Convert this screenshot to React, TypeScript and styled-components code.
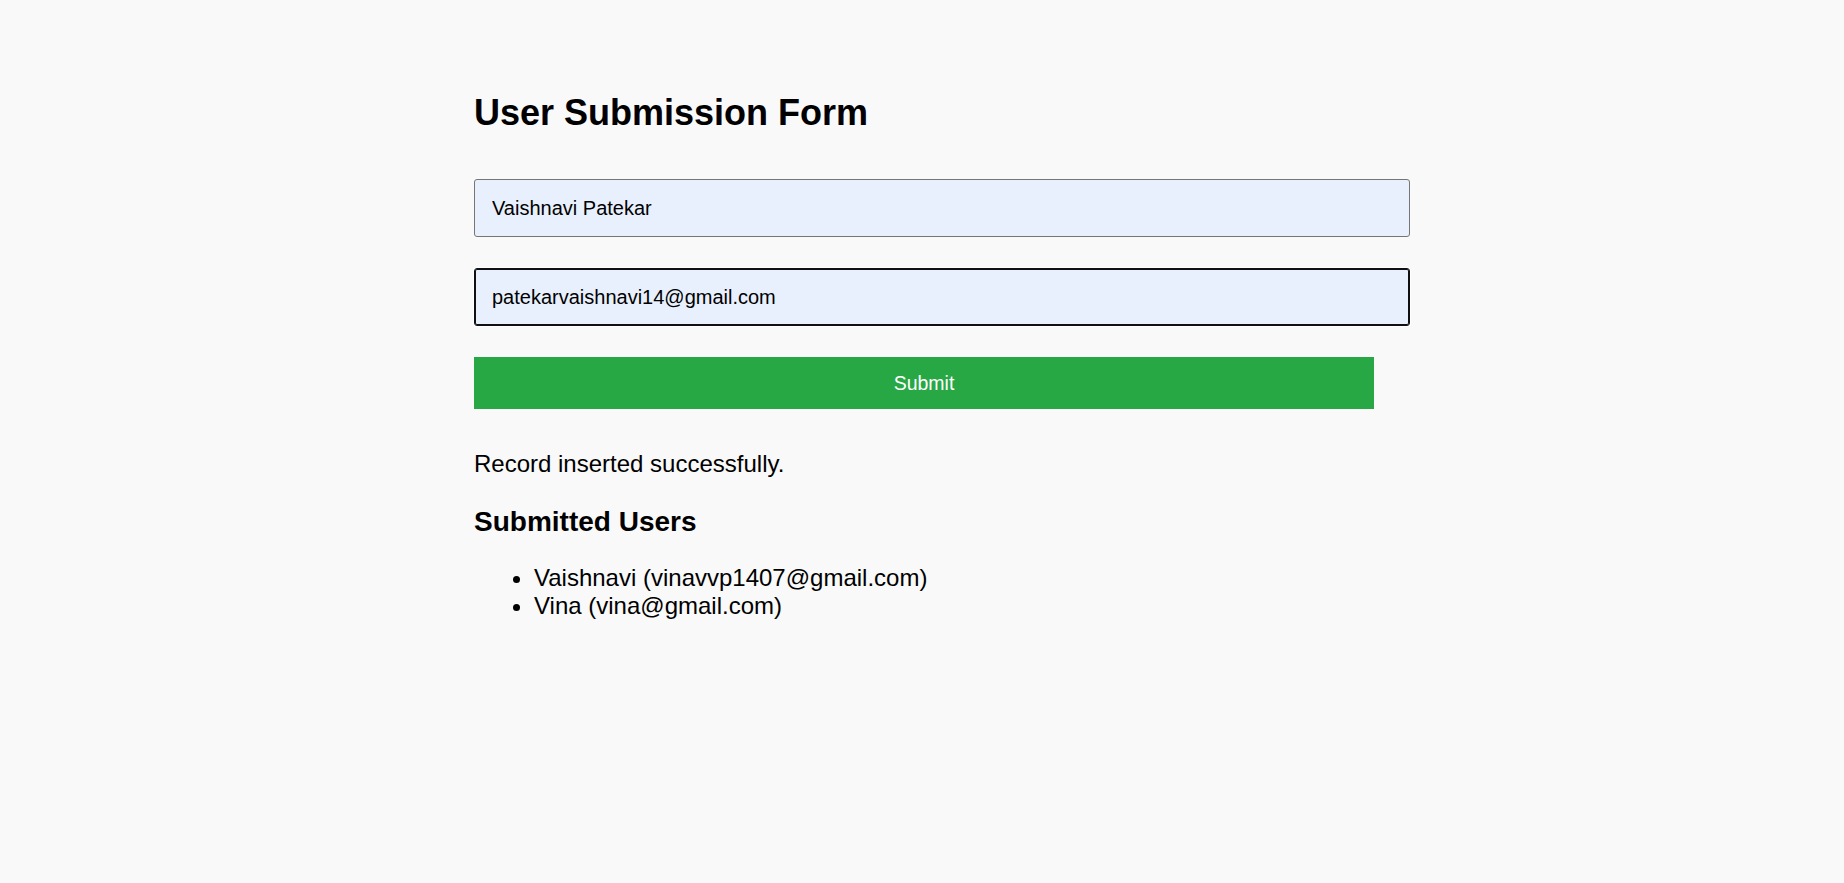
import React from "react";
import styled, { createGlobalStyle } from "styled-components";

const GlobalStyle = createGlobalStyle`
  html, body {
    margin: 0;
    padding: 0;
    background: #f9f9f9;
  }
  body {
    font-family: "Liberation Sans", Arial, sans-serif;
    color: #000;
  }
`;

const Page = styled.div`
  min-height: 883px;
  padding: 91px 0 0 4px;
  box-sizing: border-box;
  background: #f9f9f9;
`;

const Container = styled.main`
  width: 900px;
  margin: 0 auto;
  display: flex;
  flex-direction: column;
`;

const Title = styled.h1`
  margin: 0 0 44px;
  font-size: 36px;
  line-height: 44px;
  font-weight: 700;
`;

const Form = styled.form`
  display: flex;
  flex-direction: column;
  align-items: flex-start;
  gap: 31px;
`;

const Input = styled.input<{ $focused?: boolean }>`
  box-sizing: content-box;
  width: 100%;
  height: 56px;
  padding: 0 17px;
  margin: 0;
  border: 1px solid ${(p) => (p.$focused ? "#101010" : "#767676")};
  border-radius: 3px;
  background: #e8f0fe;
  font-family: "Liberation Sans", Arial, sans-serif;
  font-size: 20px;
  color: #000;
  outline: none;
  box-shadow: ${(p) => (p.$focused ? "inset 0 0 0 1px #101010, 0 0 0 1px #ffffff" : "none")};
`;

const SubmitButton = styled.button`
  width: 100%;
  height: 52px;
  border: none;
  border-radius: 0;
  background: #28a745;
  color: #fff;
  font-family: "Liberation Sans", Arial, sans-serif;
  font-size: 19.5px;
  cursor: pointer;
`;

const Message = styled.p`
  margin: 41px 0 0;
  font-size: 24px;
  line-height: 27px;
`;

const SubTitle = styled.h3`
  margin: 29px 0 0;
  font-size: 28px;
  line-height: 32px;
  font-weight: 700;
`;

const UserList = styled.ul`
  margin: 26px 0 0;
  padding-left: 60px;
  list-style: disc;
`;

const UserItem = styled.li`
  font-size: 24px;
  line-height: 28px;
`;

const users = [
  { name: "Vaishnavi", email: "vinavvp1407@gmail.com" },
  { name: "Vina", email: "vina@gmail.com" },
];

export default function App() {
  return (
    <>
      <GlobalStyle />
      <Page>
        <Container>
          <Title>User Submission Form</Title>
          <Form onSubmit={(e) => e.preventDefault()}>
            <Input type="text" name="name" defaultValue="Vaishnavi Patekar" />
            <Input type="email" name="email" defaultValue="patekarvaishnavi14@gmail.com" $focused />
            <SubmitButton type="submit">Submit</SubmitButton>
          </Form>
          <Message>Record inserted successfully.</Message>
          <SubTitle>Submitted Users</SubTitle>
          <UserList>
            {users.map((u) => (
              <UserItem key={u.email}>
                {u.name} ({u.email})
              </UserItem>
            ))}
          </UserList>
        </Container>
      </Page>
    </>
  );
}
